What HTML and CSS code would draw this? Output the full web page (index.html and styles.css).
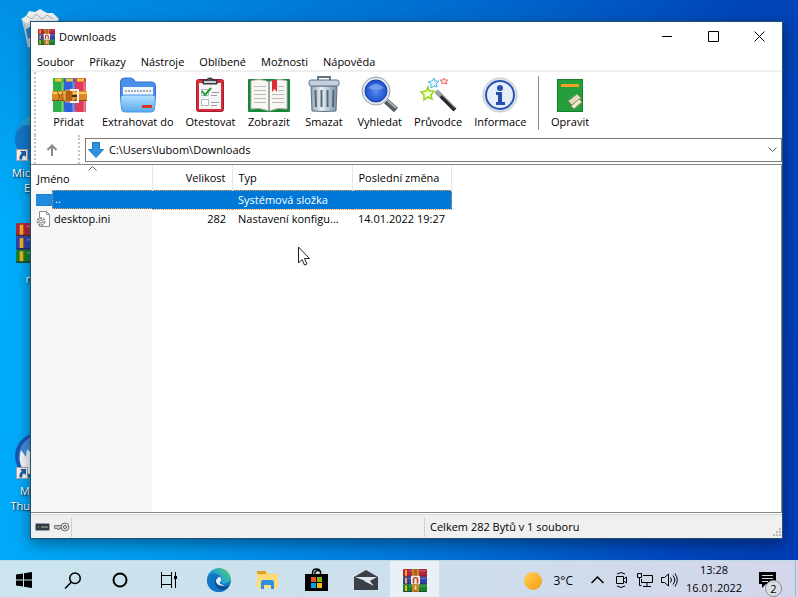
FILE: index.html
```html
<!DOCTYPE html>
<html lang="cs">

<head>
    <meta charset="utf-8">
    <title>Downloads</title>
    <link rel="stylesheet" href="styles.css">
</head>

<body>
    <!-- shared icons -->
    <svg class="defs" aria-hidden="true">
        <defs>
            <linearGradient id="gFolder" x1="0" y1="0" x2="0" y2="1">
                <stop offset="0" stop-color="#b4e2ff" />
                <stop offset="1" stop-color="#58a8ec" />
            </linearGradient>
            <linearGradient id="gMetal" x1="0" y1="0" x2="1" y2="0">
                <stop offset="0" stop-color="#8fa3b5" />
                <stop offset=".4" stop-color="#e8eff5" />
                <stop offset="1" stop-color="#7d92a6" />
            </linearGradient>
            <linearGradient id="gEdge" x1="0" y1="1" x2="1" y2="0">
                <stop offset="0" stop-color="#0c59a4" />
                <stop offset=".5" stop-color="#1b9de2" />
                <stop offset="1" stop-color="#5ad65a" />
            </linearGradient>
            <radialGradient id="gGlass">
                <stop offset="0" stop-color="#5b8df0" />
                <stop offset="1" stop-color="#1d4fd0" />
            </radialGradient>
            <linearGradient id="gSun" x1="0" y1="0" x2="1" y2="1">
                <stop offset="0" stop-color="#ffd24d" />
                <stop offset="1" stop-color="#f59a1c" />
            </linearGradient>
            <symbol id="rar" viewBox="0 0 24 24">
                <rect x="0" y="0" width="24" height="8" rx="1" fill="#b3253f" />
                <rect x="0" y="8" width="24" height="8" rx="1" fill="#3044a8" />
                <rect x="0" y="16" width="24" height="8" rx="1" fill="#17802c" />
                <path d="M0 7.500h24M0 15.500h24M0 23.500h24" stroke="#1b1b2c" stroke-opacity=".55" />
                <path d="M3 1v6M3 9v6M3 17v6" stroke="#f0b020" stroke-width="2" />
                <path d="M6 2h17M6 10h17M6 18h17" stroke="#fff" stroke-opacity=".3" />
                <rect x="9" y="0" width="7" height="24" fill="#a8641c" />
                <path d="M10 0v24M15 0v24" stroke="#eba33c" />
                <rect x="8" y="7" width="9" height="9" rx="1" fill="#f2ebe0" />
                <path d="M10.500 15v-4a2 2 0 0 1 4 0v4" fill="none" stroke="#c03418" stroke-width="1.500" />
                <path d="M12.500 17v5" stroke="#ffd98a" stroke-width="2" />
            </symbol>
            <symbol id="edge" viewBox="0 0 24 24">
                <circle cx="12" cy="12" r="12" fill="url(#gEdge)" />
                <path d="M1 9C4 4 9 5 12 7c3 2 3 5 1 7 3 3 8 2 11-2-1 7-6 12-12 12C5 24 0 19 0 12z" fill="#1276c8" />
                <path d="M9 10c-3 4 0 11 6 12 3 0 6-2 8-5-4 2-9 2-11-1-1-2-1-4 1-6z" fill="#0b4c94" />
                <path d="M13 9c2 2 1 4 0 5s1 3 5 3c-5 2-9-1-9-4 0-2 2-4 4-4z" fill="#e2f4f7" />
            </symbol>
            <symbol id="shortcut" viewBox="0 0 12 12">
                <rect x=".5" y=".5" width="11" height="11" fill="#f4f4f4" stroke="#a5a5a5" />
                <path d="M4 2h6v6L8 6.200C6.500 7 6 8.500 6.200 10.500H3.400C3 8 4 5.500 6 4z" fill="#1e5ba8" />
            </symbol>
        </defs>
    </svg>

    <main class="desktop">
        <div class="shortcut bin">
            <svg width="38" height="40" viewBox="0 0 38 40">
                <path d="M1 11h36l-5 27q-12 3-25 0z" fill="#c9d3da" />
                <path d="M0 10l5-3 3-5 6 1 5-3 7 4 6 0 6 6-3 4-15 2-15-2z" fill="#eef0f1" />
                <path d="M6 7l5 3 4-5 6 5 5-4 6 4M3 14l5 22M11 16l2 21" fill="none" stroke="#aab4bb" />
                <path d="M5 20l6-3 1 9-5 4z" fill="#1d80d0" />
            </svg>
        </div>
        <div class="shortcut edge-link">
            <svg width="46" height="46"><use href="#edge" /></svg>
            <svg class="arrow" width="12" height="12"><use href="#shortcut" /></svg>
            <span>Mic<br>E</span>
        </div>
        <div class="shortcut rar-link">
            <svg width="44" height="40" viewBox="0 0 24 24" preserveAspectRatio="none"><use href="#rar" /></svg>
            <span>r</span>
        </div>
        <div class="shortcut bird-link">
            <svg width="46" height="46" viewBox="0 0 46 46">
                <circle cx="23" cy="23" r="23" fill="#1b56b0" />
                <path d="M4 24c0-12 8-20 18-22-8 5-8 8-8 8l10 2v30C12 42 4 36 4 24z" fill="#3f8ede" />
                <path d="M6 17l5 7 1-8 6 6v20C8 40 2 30 6 17z" fill="#f4f8fc" />
            </svg>
            <svg class="arrow" width="12" height="12"><use href="#shortcut" /></svg>
            <span>M<br>Thu</span>
        </div>

        <section class="window">
            <header class="titlebar">
                <svg width="17" height="16" viewBox="0 0 24 24" preserveAspectRatio="none"><use href="#rar" /></svg>
                <h1>Downloads</h1>
                <button class="win-btn" aria-label="Minimalizovat"><svg width="11" height="11"><path d="M0 5.500h10" /></svg></button>
                <button class="win-btn" aria-label="Maximalizovat"><svg width="11" height="11"><path d="M.5.5h10v10h-10z" /></svg></button>
                <button class="win-btn" aria-label="Zavřít"><svg width="11" height="11"><path d="M.5.5l10 10M10.500.5l-10 10" /></svg></button>
            </header>

            <nav class="menu">
                <button>Soubor</button>
                <button>Příkazy</button>
                <button>Nástroje</button>
                <button>Oblíbené</button>
                <button>Možnosti</button>
                <button>Nápověda</button>
            </nav>

            <div class="toolbar">
                <button>
                    <svg viewBox="0 0 44 38">
                        <rect x="6" y="2" width="11" height="34" rx="1" fill="#2fae48" />
                        <rect x="17" y="2" width="11" height="34" rx="1" fill="#2f62d8" />
                        <rect x="28" y="2" width="11" height="34" rx="1" fill="#e03a5c" />
                        <path d="M15.500 6v30M26.500 6v30M37.500 6v30" stroke="#fff" stroke-opacity=".35" stroke-width="2" />
                        <path d="M8 4h7M19 4h7M30 4h7" stroke="#f5c62c" stroke-width="3" />
                        <rect x="5" y="15" width="35" height="10" rx="1" fill="#d98a24" />
                        <path d="M5 17h35" stroke="#ffc95c" stroke-width="2" />
                        <path d="M5 24.500h35" stroke="#8a4c10" />
                        <path d="M10 16q5 4 0 9M16 16q-3 4 0 9" stroke="#8a4c10" fill="none" />
                        <rect x="18" y="14" width="8" height="12" rx="2" fill="#b06018" stroke="#f4b64c" />
                        <path d="M23 14h8v12h-8" fill="none" stroke="#f4f1ec" stroke-width="2" />
                        <path d="M25 20h5" stroke="#4b2b10" stroke-width="2" />
                    </svg>
                    Přidat
                </button>
                <button>
                    <svg viewBox="0 0 44 38">
                        <path d="M4.500 6q0-4 4-4h6q3 0 5 4h16q4 0 4 4v14h-35z" fill="#4b90ea" stroke="#2f70d0" />
                        <path d="M7 11h30v12H7z" fill="#f3f6fa" />
                        <path d="M9 15h26" stroke="#a6aab4" stroke-width="2" stroke-dasharray="2 1" />
                        <path d="M4.500 22q0-3 4-3h27q4 0 4 3l-1 11q0 3-4 3h-25q-4 0-4-3z" fill="url(#gFolder)" stroke="#4b96e2" />
                        <path d="M26 30.500h10" stroke="#dc3424" stroke-width="3" />
                    </svg>
                    Extrahovat do
                </button>
                <button>
                    <svg viewBox="0 0 44 38">
                        <rect x="8.500" y="3.500" width="27" height="32" rx="2" fill="#d92b3d" stroke="#a41c2c" />
                        <path d="M11 7h22v26H11z" fill="#f6f6f6" />
                        <path d="M15 4h4q0-2 3-2t3 2h4v4H15z" fill="#4a4f55" stroke="#2e3236" />
                        <path d="M16 6h12" stroke="#c9ced3" stroke-width="2" />
                        <path d="M13.500 13.500h7v6h-7zM13.500 23.500h7v6h-7z" fill="#fff" stroke="#b4b4b4" />
                        <path d="M14 15l3 4 6-7" fill="none" stroke="#1d9a35" stroke-width="2" />
                        <path d="M24 16.500h7M23 19.500h6M23 26.500h8M23 29.500h6" stroke="#9b9b9b" />
                    </svg>
                    Otestovat
                </button>
                <button>
                    <svg viewBox="0 0 44 38">
                        <rect x="1" y="3" width="42" height="33" rx="1" fill="#15863a" />
                        <path d="M4 5q9-3 18 1 9-4 18-1v28q-9-2-18 2-9-4-18-2z" fill="#f7f6f2" stroke="#b9b8ae" />
                        <path d="M7 10.500h12M7 14.500h12M7 18.500h12M7 22.500h12M7 26.500h12M25 18.500h12M25 22.500h12M25 26.500h12M31 10.500h6M31 14.500h6" stroke="#bdbcb4" />
                        <path d="M22 6v29" stroke="#55554d" />
                        <path d="M25 4h5v12l-2.500-3-2.500 3z" fill="#d92f35" />
                    </svg>
                    Zobrazit
                </button>
                <button>
                    <svg viewBox="0 0 44 38">
                        <path d="M16 4V1h12v3" fill="none" stroke="#5f7385" stroke-width="2" />
                        <path d="M9 10h26l-1 25q-12 1-24 0z" fill="url(#gMetal)" stroke="#5f7385" />
                        <path d="M13.500 14l.5 17M19.500 14v17M25.500 14v17M31.500 14l-.5 17" stroke="#56697b" stroke-width="2" />
                        <rect x="7" y="4" width="30" height="6" rx="2" fill="#c4d1dc" stroke="#5f7385" />
                    </svg>
                    Smazat
                </button>
                <button>
                    <svg viewBox="0 0 44 38">
                        <path d="M28 25l10 9" stroke="#555b62" stroke-width="6" />
                        <path d="M29 24l9 8" stroke="#a9b0b7" stroke-width="2" />
                        <circle cx="18" cy="15" r="14" fill="#dfe5ec" stroke="#9aa5b2" />
                        <circle cx="18" cy="15" r="11" fill="url(#gGlass)" stroke="#1b3e9c" />
                        <path d="M10 12q8-8 16 0-8 4-16 0z" fill="#a6c4fb" fill-opacity=".5" />
                    </svg>
                    Vyhledat
                </button>
                <button>
                    <svg viewBox="0 0 44 38">
                        <path d="M12 11l1 4 5 0-3 4 1 4-4-2-4 3 0-5-3-3 5-1z" fill="#f6ffd0" stroke="#9bd422" stroke-width="1.500" />
                        <path d="M18 2l1 3 4 0-3 3 1 3-3-1-3 2 0-4-3-2 4-1z" fill="#e2f7ff" stroke="#42b4ee" />
                        <path d="M28 2l1 2 3 0-2 2 1 2-3-1-2 1 0-2-2-2 3 0z" fill="#ffe3e3" stroke="#ee6a6a" />
                        <path d="M21 16l18 18" stroke="#25282c" stroke-width="4" />
                        <path d="M20 15l5 5" stroke="#9da1a6" stroke-width="4" />
                        <path d="M26 19l13 13" stroke="#8d9197" />
                    </svg>
                    Průvodce
                </button>
                <button>
                    <svg viewBox="0 0 44 38">
                        <circle cx="22" cy="19" r="17" fill="#dfe3e8" stroke="#c2c7ce" />
                        <circle cx="22" cy="19" r="14" fill="#e6eefb" stroke="#2855b4" stroke-width="2" />
                        <circle cx="22" cy="12" r="3" fill="#2450b0" />
                        <path d="M18 16h6v10h3v3h-9v-3h2v-7h-2z" fill="#2450b0" />
                    </svg>
                    Informace
                </button>
                <hr>
                <button>
                    <svg viewBox="0 0 44 38">
                        <rect x="9.500" y="3.500" width="25" height="32" fill="#23a03c" stroke="#16802c" />
                        <path d="M13 9.500h18" stroke="#f0a022" stroke-width="3" />
                        <path d="M20 25l9-7 4 4-9 7z" fill="#e5dcbc" stroke="#8f8a68" />
                        <path d="M23 30l8-7 3 3-8 7z" fill="#f1ead2" stroke="#8f8a68" />
                    </svg>
                    Opravit
                </button>
            </div>

            <div class="address">
                <button class="up" aria-label="O úroveň výš">
                    <svg width="12" height="12"><path d="M6 12V1.500M1.500 6L6 1.500 10.500 6" fill="none" stroke="#8a8a8a" stroke-width="2" /></svg>
                </button>
                <div class="path">
                    <svg width="16" height="16"><path d="M4.500.5h7v7h4L8 15.500.5 7.500h4z" fill="#3391dc" stroke="#1f78c2" /></svg>
                    <select aria-label="Cesta">
                        <option>C:\Users\lubom\Downloads</option>
                    </select>
                    <svg width="9" height="6"><path d="M.5.5l4 4 4-4" fill="none" stroke="#505050" /></svg>
                </div>
            </div>

            <div class="files">
                <table>
                    <thead>
                        <tr>
                            <th class="c-name">Jméno<svg class="sort" width="9" height="5"><path d="M.5 4.500l4-4 4 4" fill="none" stroke="#606060" /></svg></th>
                            <th class="c-size">Velikost</th>
                            <th class="c-type">Typ</th>
                            <th class="c-date">Poslední změna</th>
                        </tr>
                    </thead>
                    <tbody>
                        <tr class="selected">
                            <td>
                                <div class="name">
                                    <svg width="16" height="14"><path d="M0 1h16v12H0z" fill="#1f8ae0" /><path d="M0 1.500h16M0 12.500h16" stroke="#0f72cc" stroke-dasharray="1 1" /></svg>
                                    <span>..</span>
                                </div>
                            </td>
                            <td></td>
                            <td>Systémová složka</td>
                            <td></td>
                        </tr>
                        <tr>
                            <td>
                                <div class="name">
                                    <svg width="16" height="16"><path d="M3.500.5h7l3 3v12h-10z" fill="#fff" stroke="#8c8c8c" /><path d="M10.500.5v3h3" fill="none" stroke="#8c8c8c" /><circle cx="5" cy="10.500" r="3.500" fill="#f2f2f2" stroke="#8c8c8c" stroke-width="2" stroke-dasharray="2 1" /><circle cx="5" cy="10.500" r="1.500" fill="#fff" stroke="#8c8c8c" /></svg>
                                    <span>desktop.ini</span>
                                </div>
                            </td>
                            <td class="num">282</td>
                            <td>Nastavení konfigu...</td>
                            <td>14.01.2022 19:27</td>
                        </tr>
                    </tbody>
                </table>
            </div>

            <footer class="status">
                <div class="status-icons">
                    <svg width="15" height="8"><rect x=".5" y=".5" width="14" height="7" rx="1" fill="#303a40" stroke="#8ba0b4" /><path d="M3 4h1M6 4h7" stroke="#aeb9a8" /></svg>
                    <svg width="16" height="10"><path d="M.5 3.500h7v3h-2v1h-2v-1h-3z" fill="#c4c4c4" stroke="#7a7a7a" /><circle cx="11" cy="5" r="4" fill="#e4e4e4" stroke="#6f6f6f" /><circle cx="11" cy="5" r="1.500" fill="#fff" stroke="#555" /></svg>
                </div>
                <div class="status-left"></div>
                <div class="status-right">Celkem 282 Bytů v 1 souboru</div>
                <svg class="grip" width="9" height="9"><path d="M7 1h2M4 4h2M7 4h2M1 7h2M4 7h2M7 7h2" stroke="#bcbcbc" stroke-width="2" /></svg>
            </footer>
        </section>

        <svg class="cursor" width="13" height="20"><path d="M1.500 1v16l3.500-3.500 2.500 5.500 2.500-1-2.500-5.500h5z" fill="#fff" stroke="#222" /></svg>
    </main>

    <footer class="taskbar">
        <button aria-label="Start"><svg width="16" height="16"><path d="M0 2.500l7-1V7.500H0zM8 1.300L16 0v7.500H8zM0 8.500h7v6l-7-1zM8 8.500h8V16l-8-1.300z" /></svg></button>
        <button aria-label="Hledat"><svg width="17" height="17"><path d="M7 10.500L1 16.500M11 1a5 5 0 1 1 0 10.500A5 5 0 1 1 11 1z" fill="none" stroke="#000" stroke-width="1.500" /></svg></button>
        <button aria-label="Cortana"><svg width="16" height="16"><circle cx="8" cy="8" r="6.500" fill="none" stroke="#000" stroke-width="2" /></svg></button>
        <button aria-label="Zobrazení úkolů"><svg width="17" height="16"><path d="M1.500 0v3.500h10V0M1.500 16v-3.500h10V16M1.500 3v10M11.500 3v10M15.500 0v16" fill="none" stroke="#000" /><path d="M14 4h3v3h-3z" /></svg></button>
        <div class="pinned">
            <button aria-label="Microsoft Edge"><svg width="24" height="24"><use href="#edge" /></svg></button>
            <button aria-label="Průzkumník souborů">
                <svg width="22" height="20"><path d="M0 1h9l2 3h10v14H0z" fill="#f9cf61" /><path d="M0 1h9v3H0z" fill="#e3a021" /><path d="M0 5h21v13H0z" fill="#fddb78" /><path d="M4 12q0-2 2-2h9q2 0 2 2v7h-3v-4H7v4H4z" fill="#2d8fdf" /></svg>
            </button>
            <button aria-label="Microsoft Store">
                <svg width="23" height="24"><path d="M7.500 7V5q0-4 4-4t4 4v2M10 7V4q3-3 6 0" fill="none" stroke="#000" stroke-width="1.500" /><path d="M0 6h23v17H0z" /><path d="M6 9h5v5H6z" fill="#f25022" /><path d="M12 9h5v5h-5z" fill="#7fba00" /><path d="M6 15h5v5H6z" fill="#00a4ef" /><path d="M12 15h5v5h-5z" fill="#ffb900" /></svg>
            </button>
            <button aria-label="Pošta">
                <svg width="24" height="20"><path d="M0 7l12-7 12 7v13H0z" fill="#3c4046" /><path d="M1 7h22l-9 5z" fill="#dfe8ef" /><path d="M10 11l10 5-5-6z" fill="#dfe8ef" /></svg>
            </button>
            <button class="active" aria-label="WinRAR"><svg width="24" height="23" viewBox="0 0 24 24" preserveAspectRatio="none"><use href="#rar" /></svg></button>
        </div>

        <div class="tray">
            <div class="weather">
                <svg width="19" height="19"><circle cx="9" cy="9" r="9" fill="url(#gSun)" /></svg>
                3°C
            </div>
            <button aria-label="Skryté ikony"><svg width="13" height="8"><path d="M.5 7l6-6 6 6" fill="none" stroke="#000" stroke-width="1.500" /></svg></button>
            <button aria-label="Sejít se"><svg width="13" height="16"><path d="M1.500 4.500h7v7h-7zM8.500 7l3-2v6l-3-2M2 2q4-3 8 0M2 14q4 3 8 0" fill="none" stroke="#000" /></svg></button>
            <button aria-label="Síť"><svg width="16" height="14"><path d="M6 2.500h9.500v7H4.500V6M10 9.500v3.500M6 13.500h8M.5.5h4v4h-4zM2.500 4.500v8h2" fill="none" stroke="#000" /></svg></button>
            <button aria-label="Hlasitost"><svg width="17" height="14"><path d="M.5 4.500h3l4-3.500v12l-4-3.500h-3zM9.500 4.500q2 2.500 0 5M12 2.500q3.500 4.500 0 9M14 .5q4.500 6.500 0 13" fill="none" stroke="#000" /></svg></button>
            <time class="clock" datetime="2022-01-16T13:28">13:28<br>16.01.2022</time>
            <button class="notify" aria-label="Oznámení">
                <svg width="17" height="16"><path d="M0 0h17v12H7l-4 4v-4H0z" /><path d="M3 3.500h11M3 6.500h11M3 9.500h6" stroke="#d3d9e8" /></svg>
                <span class="badge">2</span>
            </button>
        </div>
    </footer>
</body>

</html>
```
FILE: styles.css
```css
*,
*:before,
*:after {
    box-sizing: border-box;
}

body {
    display: flex;
    flex-direction: column;
    min-height: 100vh;
    margin: 0;
    font: 11px/16px "Open Sans", "Noto Sans", sans-serif;
    color: #000;
}

button {
    padding: 0;
    border: 0;
    background: none;
    color: inherit;
    font: inherit;
}

svg {
    flex: none;
    display: block;
}

.defs {
    position: absolute;
    width: 0;
    height: 0;
}

/* desktop */

.desktop {
    position: relative;
    flex: 1;
    display: flex;
    padding: 21px 15px 21px 30px;
    overflow: hidden;
    background: linear-gradient(rgba(0, 70, 170, .3), rgba(0, 70, 170, 0) 40%), linear-gradient(97deg, #00b0fc 0%, #009cf0 25%, #0078dc 55%, #0046be 85%, #003cb4 100%);
}

.shortcut {
    position: absolute;
    left: 0;
    display: flex;
    flex-direction: column;
    align-items: center;
    width: 76px;
    color: #fff;
    line-height: 15px;
    text-shadow: 1px 1px 2px #000;
}

.shortcut span {
    align-self: flex-start;
    width: 30px;
    margin-top: 4px;
    text-align: right;
}

.shortcut .arrow {
    position: absolute;
    top: 34px;
    left: 16px;
}

.bin {
    top: 9px;
    left: 2px;
}

.edge-link {
    top: 115px;
}

.rar-link {
    top: 223px;
}

.rar-link span {
    margin-top: 8px;
}

.bird-link {
    top: 433px;
}

/* window */

.window {
    position: relative;
    flex: 1;
    display: flex;
    flex-direction: column;
    min-width: 0;
    border: 1px solid #24506e;
    background: #fff;
    box-shadow: 0 5px 14px rgba(0, 0, 0, .4);
}

.titlebar {
    display: flex;
    align-items: center;
    height: 29px;
    padding-left: 7px;
}

.titlebar h1 {
    flex: 1;
    margin: 0 0 0 4px;
    font-size: 11px;
    font-weight: 400;
}

.win-btn {
    display: flex;
    align-items: center;
    justify-content: center;
    width: 46px;
    height: 29px;
}

.win-btn path {
    fill: none;
    stroke: #000;
}

.menu {
    display: flex;
    height: 21px;
    border-bottom: 2px solid #f0f0f0;
}

.menu button {
    padding: 2px 9px 0 6px;
}

.toolbar {
    display: flex;
    margin-left: 3px;
    padding: 4px 0 5px 5px;
    border-left: 2px dotted #c4c4c4;
}

.toolbar button {
    display: flex;
    flex-direction: column;
    align-items: center;
    min-width: 55px;
    padding: 0 6px;
}

.toolbar svg {
    width: 44px;
    height: 38px;
    margin: 0 -6px;
}

.toolbar hr {
    align-self: stretch;
    width: 1px;
    margin: 0 4px 0 5px;
    border: 0;
    background: #8c8c8c;
}

.address {
    display: flex;
    height: 29px;
    margin-left: 3px;
    border-left: 2px dotted #c4c4c4;
}

.up {
    display: flex;
    justify-content: center;
    align-items: center;
    width: 44px;
    margin-right: 5px;
    border-right: 2px dotted #c4c4c4;
}

.up svg {
    margin-right: 10px;
}

.path {
    flex: 1;
    display: flex;
    align-items: center;
    height: 24px;
    margin-top: 3px;
    padding: 0 4px 0 2px;
    border: 1px solid #7a7a7a;
}

.path select {
    flex: 1;
    min-width: 0;
    padding: 0 0 0 5px;
    border: 0;
    appearance: none;
    background: none;
    color: inherit;
    font: inherit;
}

/* file list */

.files {
    flex: 1;
    border: 1px solid #828790;
    border-left: 0;
    background: linear-gradient(to right, #f6f6f6 121px, #fff 121px);
}

.files table {
    width: 421px;
    border-collapse: collapse;
    table-layout: fixed;
}

.files th {
    position: relative;
    height: 25px;
    padding: 2px 6px 0;
    border-right: 1px solid #e5e5e5;
    background: #fff;
    font-weight: 400;
    text-align: left;
}

.files .c-name {
    width: 121px;
}

.files .c-size {
    width: 80px;
    text-align: right;
}

.files .c-type {
    width: 120px;
}

.sort {
    position: absolute;
    top: 1px;
    left: 57px;
}

.files td {
    height: 19px;
    padding: 0 6px;
    white-space: nowrap;
}

.files td:first-child {
    padding: 0 0 0 5px;
}

.files .num {
    text-align: right;
}

.name {
    display: flex;
    align-items: center;
}

.name span {
    flex: 1;
    padding-left: 2px;
}

.selected td,
.selected .name span {
    background: #0078d7;
    color: #fff;
    border: 1px dotted #e59a50;
    border-width: 1px 0;
}

.selected td:first-child {
    border: 0;
    background: none;
}

.selected td:last-child {
    border-right-width: 1px;
}

.selected .name span {
    height: 19px;
    border-left-width: 1px;
}

/* status bar */

.status {
    position: relative;
    display: flex;
    align-items: center;
    height: 24px;
    margin-top: 1px;
    border-top: 1px solid #d7d7d7;
    background: #f0f0f0;
}

.status-icons {
    display: flex;
    align-items: center;
    gap: 4px;
    width: 41px;
    height: 20px;
    padding-left: 4px;
    border-right: 1px solid #d0d0d0;
}

.status-left {
    flex: 1;
    height: 20px;
    border-right: 1px solid #d0d0d0;
}

.status-right {
    flex: 1;
    padding-left: 5px;
}

.grip {
    position: absolute;
    right: 1px;
    bottom: 1px;
}

.cursor {
    position: absolute;
    top: 246px;
    left: 297px;
}

/* taskbar */

.taskbar {
    display: flex;
    height: 37px;
    border-top: 1px solid #bcd9e6;
    background: linear-gradient(to right, #cbe4ee, #cddfec 50%, #d3d6ea);
}

.taskbar button {
    display: flex;
    align-items: center;
    justify-content: center;
    width: 48px;
    padding-top: 2px;
}

.pinned {
    display: flex;
    margin-left: 2px;
}

.pinned button {
    width: 49px;
}

.pinned .active {
    background: #e9f1f7;
}

.tray {
    display: flex;
    align-items: center;
    margin-left: auto;
    align-self: stretch;
    padding-right: 2px;
}

.tray button {
    width: 24px;
    height: 36px;
}

.weather {
    display: flex;
    align-items: center;
    gap: 10px;
    padding: 4px 12px 0 0;
    font-size: 12px;
}

.clock {
    width: 66px;
    line-height: 18px;
    text-align: center;
}

.tray .notify {
    position: relative;
    width: 49px;
    padding-right: 8px;
    border-right: 1px solid #a9b3c4;
}

.badge {
    position: absolute;
    right: 13px;
    bottom: 0;
    width: 17px;
    height: 17px;
    border: 1px solid #8c8c8c;
    border-radius: 50%;
    background: #d9dde4;
    line-height: 15px;
}
```
